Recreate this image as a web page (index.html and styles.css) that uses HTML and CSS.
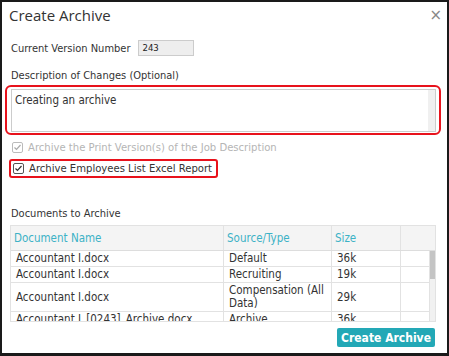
FILE: index.html
```html
<!DOCTYPE html>
<html lang="en">
<head>
    <meta charset="UTF-8">
    <title>Create Archive</title>
    <link rel="stylesheet" href="styles.css">
</head>
<body>
    <div class="modal">
        <div class="modal-header">
            <span class="modal-title">Create Archive</span>
            <span class="modal-close">&times;</span>
        </div>
        <div class="modal-body">
            <div class="version-row">
                <span class="label">Current Version Number</span>
                <span class="version-input">243</span>
            </div>
            <div class="label desc-label">Description of Changes (Optional)</div>
            <div class="highlight highlight-desc">
                <div class="textarea">
                    <span class="textarea-text">Creating an archive</span>
                    <span class="textarea-track"></span>
                </div>
            </div>
            <div class="check-row check-disabled">
                <svg class="check-box" width="11" height="11" viewBox="0 0 11 11">
                    <rect x="0.5" y="0.5" width="10" height="10" rx="1.5" fill="#fff" stroke="#bbb"/>
                    <path d="M2.5 5.5 L4.5 7.5 L8.5 3" fill="none" stroke="#aaa" stroke-width="1.2"/>
                </svg>
                <span>Archive the Print Version(s) of the Job Description</span>
            </div>
            <div class="highlight highlight-check">
                <div class="check-row">
                    <svg class="check-box" width="11" height="11" viewBox="0 0 11 11">
                        <rect x="0.5" y="0.5" width="10" height="10" rx="1.5" fill="#fff" stroke="#555"/>
                        <path d="M2.5 5.5 L4.5 7.5 L8.5 3" fill="none" stroke="#333" stroke-width="1.2"/>
                    </svg>
                    <span>Archive Employees List Excel Report</span>
                </div>
            </div>
            <div class="label docs-label">Documents to Archive</div>
            <div class="doc-table">
                <div class="doc-head">
                    <div class="col col-name">Document Name</div>
                    <div class="col col-type">Source/Type</div>
                    <div class="col col-size">Size</div>
                    <div class="col col-head-blank"></div>
                </div>
                <div class="doc-scroll">
                    <div class="doc-rows">
                        <div class="doc-row">
                            <div class="col col-name">Accountant I.docx</div>
                            <div class="col col-type">Default</div>
                            <div class="col col-size">36k</div>
                            <div class="col col-blank"></div>
                        </div>
                        <div class="doc-row">
                            <div class="col col-name">Accountant I.docx</div>
                            <div class="col col-type">Recruiting</div>
                            <div class="col col-size">19k</div>
                            <div class="col col-blank"></div>
                        </div>
                        <div class="doc-row">
                            <div class="col col-name">Accountant I.docx</div>
                            <div class="col col-type">Compensation (All Data)</div>
                            <div class="col col-size">29k</div>
                            <div class="col col-blank"></div>
                        </div>
                        <div class="doc-row">
                            <div class="col col-name">Accountant I_[0243]_Archive.docx</div>
                            <div class="col col-type">Archive</div>
                            <div class="col col-size">36k</div>
                            <div class="col col-blank"></div>
                        </div>
                    </div>
                    <div class="scrollbar"><div class="scroll-thumb"></div></div>
                </div>
            </div>
            <div class="modal-footer">
                <button class="btn-create">Create Archive</button>
            </div>
        </div>
    </div>
</body>
</html>
```

FILE: styles.css
```css
html, body {
    margin: 0;
    padding: 0;
    background: #fff;
}
.modal {
    width: 449px;
    height: 356px;
    box-sizing: border-box;
    border: 2px solid #1a1a1a;
    border-bottom-width: 3px;
    background: #fff;
    font-family: 'DejaVu Sans Condensed', 'DejaVu Sans', sans-serif;
    font-size: 11px;
    color: #333;
    overflow: hidden;
}
.modal-header {
    display: flex;
    justify-content: space-between;
    align-items: center;
    height: 26px;
    padding: 0 5px 0 7px;
}
.modal-title {
    font-family: 'Open Sans', sans-serif;
    font-size: 15px;
    color: #333;
}
.modal-close {
    font-family: 'DejaVu Sans', sans-serif;
    font-size: 15px;
    color: #888;
}
.modal-body {
    display: flex;
    flex-direction: column;
}
.version-row {
    display: flex;
    align-items: center;
    gap: 8px;
    margin-top: 12px;
    padding-left: 9px;
}
.version-input {
    width: 48px;
    height: 14px;
    line-height: 14px;
    padding: 0 3px;
    border: 1px solid #ccc;
    background: #eee;
    font-size: 9.5px;
    color: #222;
}
.desc-label {
    margin-top: 13px;
    padding-left: 9px;
}
.highlight {
    border: 2px solid #e8121c;
    border-radius: 6px;
}
.highlight-desc {
    margin: 3px 6px 0 3px;
    padding: 2px 3px 1px 4px;
}
.textarea {
    display: flex;
    justify-content: space-between;
    height: 41px;
    border: 1px solid #ccc;
    background: #fff;
}
.textarea-text {
    padding: 3px 3px;
    font-size: 11.5px;
}
.textarea-track {
    width: 7px;
    background: #f0f0f0;
}
.check-row {
    display: flex;
    align-items: center;
    gap: 5px;
    font-size: 11.2px;
}
.check-disabled {
    color: #b5b5b5;
    margin-top: 6px;
    padding-left: 10px;
}
.highlight-check {
    align-self: flex-start;
    margin: 5px 0 0 7px;
    padding: 1px 4px 1px 2px;
    border-radius: 3px;
}
.docs-label {
    margin-top: 29px;
    padding-left: 9px;
}
.doc-table {
    margin: 5px 11px 0 8px;
    border: 1px solid #e2e2e2;
    height: 95px;
    overflow: hidden;
}
.doc-head {
    display: flex;
    height: 24px;
    align-items: stretch;
    background: #f4f4f4;
    border-bottom: 1px solid #ddd;
    color: #3cb2c6;
    font-size: 11.5px;
}
.doc-head .col {
    display: flex;
    align-items: center;
    padding-left: 3px;
}
.doc-scroll {
    display: flex;
}
.doc-rows {
    flex: 1;
}
.doc-row {
    display: flex;
    border-bottom: 1px solid #e2e2e2;
    font-size: 11.5px;
}
.doc-row .col {
    display: flex;
    align-items: center;
    line-height: 13px;
    padding: 1px 4px 1px 5px;
}
.col {
    box-sizing: border-box;
    border-right: 1px solid #e2e2e2;
}
.col-name { width: 213px; }
.col-type { width: 108px; }
.col-size { width: 69px; }
.col-blank { width: 29px; }
.col-head-blank { flex: 1; border-right: none; }
.scrollbar {
    width: 7px;
    background: #f1f1f1;
}
.scroll-thumb {
    height: 28px;
    background: #c4c4c4;
}
.modal-footer {
    display: flex;
    justify-content: flex-end;
    margin-top: 6px;
    padding-right: 12px;
}
.btn-create {
    height: 19px;
    width: 98px;
    border: none;
    border-radius: 2px;
    background: #23a8b6;
    color: #fff;
    font-family: 'DejaVu Sans Condensed', 'DejaVu Sans', sans-serif;
    font-size: 12px;
    font-weight: bold;
    padding: 0;
}
```
